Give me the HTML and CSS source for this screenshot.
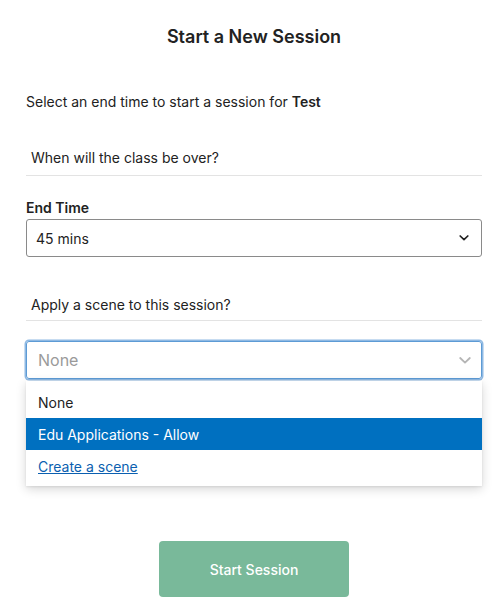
FILE: index.html
```html
<!DOCTYPE html>
<html>
<head>
<meta charset="utf-8">
<link rel="stylesheet" href="styles.css">
</head>
<body>
<div class="modal">
  <h1 class="title">Start a New Session</h1>
  <p class="intro">Select an end time to start a session for <b>Test</b></p>
  <div class="section-head">When will the class be over?</div>
  <label class="field-label">End Time</label>
  <div class="select">
    <span class="select-value">45 mins</span>
    <svg class="chev" width="10" height="6" viewBox="0 0 10 6"><path d="M1.2 1 L5 4.6 L8.8 1" fill="none" stroke="#222" stroke-width="1.7" stroke-linecap="round" stroke-linejoin="round"/></svg>
  </div>
  <div class="section-head second">Apply a scene to this session?</div>
  <div class="combo">
    <div class="select focused">
      <span class="select-value placeholder">None</span>
      <svg class="chev" width="12" height="7" viewBox="0 0 12 7"><path d="M1.2 1 L6 5.6 L10.8 1" fill="none" stroke="#b5b5b5" stroke-width="1.8" stroke-linecap="round" stroke-linejoin="round"/></svg>
    </div>
    <ul class="menu">
      <li class="menu-item">None</li>
      <li class="menu-item active">Edu Applications - Allow</li>
      <li class="menu-item"><a href="#" class="menu-link">Create a scene</a></li>
    </ul>
  </div>
  <div class="actions">
    <button class="start-btn">Start Session</button>
  </div>
</div>
</body>
</html>
```
FILE: styles.css
```css
html, body {
  margin: 0;
  padding: 0;
  background: #fff;
}
body {
  font-family: Inter, "Noto Sans", "Liberation Sans", sans-serif;
  color: #222;
}
.modal {
  padding: 26px 10px 0 26px;
}
.title {
  margin: 0;
  text-align: center;
  font-size: 18px;
  font-weight: 600;
  line-height: 22px;
  color: #222;
}
.intro {
  margin: 45px 0 0 0;
  font-size: 14px;
  line-height: 18px;
}
.intro b {
  font-weight: 600;
}
.section-head {
  margin-top: 38px;
  padding: 0 0 8px 5px;
  font-size: 14px;
  line-height: 18px;
  border-bottom: 1px solid #e3e3e3;
}
.section-head.second {
  margin-top: 39px;
  padding-bottom: 6px;
}
.field-label {
  display: block;
  margin-top: 23px;
  font-size: 14px;
  font-weight: 600;
  line-height: 18px;
}
.select {
  margin-top: 2px;
  height: 38px;
  box-sizing: border-box;
  border: 1px solid #8a8a8a;
  border-radius: 3px;
  display: flex;
  align-items: center;
  justify-content: space-between;
  padding: 0 12px 0 9px;
  font-size: 14px;
}
.combo {
  position: relative;
  margin-top: 20px;
}
.select.focused {
  margin-top: 0;
  border: 1px solid #5d9bd5;
  box-shadow: 0 0 0 1.5px #8fb9e3;
  border-radius: 3px;
  padding: 0 10px 0 11px;
  font-size: 16px;
}
.placeholder {
  color: #9a9a9a;
}
.chev {
  display: block;
}
.menu {
  position: absolute;
  left: 0;
  right: 0;
  top: 40px;
  margin: 0;
  padding: 5px 0 4px 0;
  list-style: none;
  background: #fff;
  box-shadow: 0 3px 10px rgba(0,0,0,0.16), 0 1px 2px rgba(0,0,0,0.08);
  z-index: 2;
}
.menu-item {
  height: 32px;
  display: flex;
  align-items: center;
  padding-left: 12px;
  font-size: 14px;
  color: #222;
}
.menu-item.active {
  background: #0070c0;
  color: #fff;
}
.menu-link {
  color: #0b5fb0;
  text-decoration: underline;
}
.actions {
  display: flex;
  justify-content: center;
  margin-top: 162px;
}
.start-btn {
  width: 190px;
  height: 56px;
  border: none;
  border-radius: 4px;
  background: #79b99a;
  color: #fff;
  font-family: inherit;
  font-size: 14px;
  font-weight: 500;
}
```
